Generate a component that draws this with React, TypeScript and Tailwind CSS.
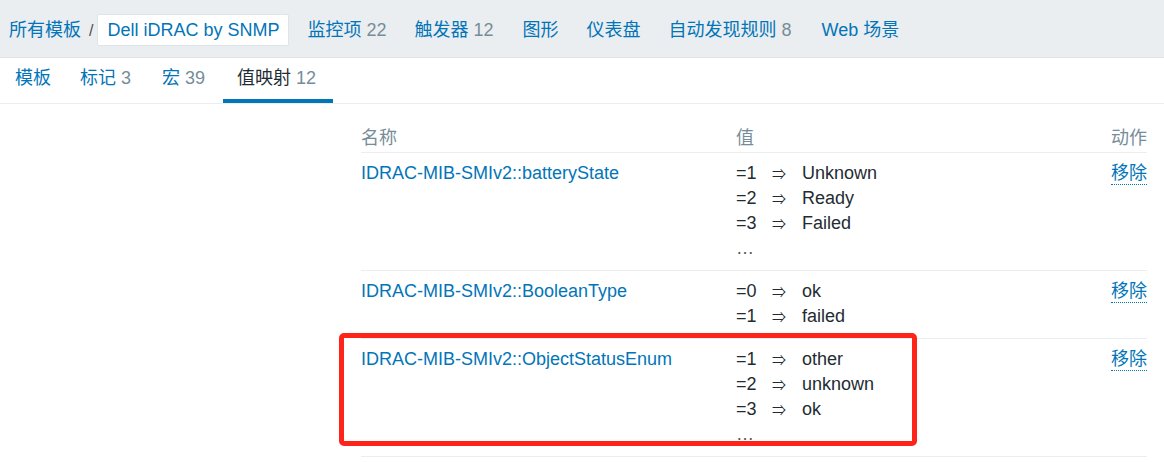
import React from "react";

const FONT = { fontFamily: '"Liberation Sans", Arial, "Noto Sans CJK SC", sans-serif' };

type Row = { name: string; values: [string, string][]; more: boolean };

const rows: Row[] = [
  {
    name: "IDRAC-MIB-SMIv2::batteryState",
    values: [
      ["=1", "Unknown"],
      ["=2", "Ready"],
      ["=3", "Failed"],
    ],
    more: true,
  },
  {
    name: "IDRAC-MIB-SMIv2::BooleanType",
    values: [
      ["=0", "ok"],
      ["=1", "failed"],
    ],
    more: false,
  },
  {
    name: "IDRAC-MIB-SMIv2::ObjectStatusEnum",
    values: [
      ["=1", "other"],
      ["=2", "unknown"],
      ["=3", "ok"],
    ],
    more: true,
  },
];

function NavItem({ label, count, className }: { label: string; count?: string; className?: string }) {
  return (
    <span className={"whitespace-nowrap " + (className || "")}>
      <span className="text-[#0275b8]">{label}</span>
      {count && <span className="text-[#768d99]"> {count}</span>}
    </span>
  );
}

export default function App() {
  return (
    <div className="w-[1164px] h-[462px] bg-white text-[18px] leading-[25px] text-[#1f2c33] relative overflow-hidden" style={FONT}>
      {/* top bar */}
      <div className="h-[58px] bg-[#ebeef0] border-b border-[#dfe4e7] flex items-start pt-[14px] pl-[9px]">
        <div className="flex items-center h-[32px]">
          <span className="text-[#0275b8]">所有模板</span>
          <span className="text-[#4f4f4f] text-[16px] ml-[8px] mr-[4px]">/</span>
          <span className="h-[32px] flex items-center px-[9px] bg-white border border-[#dfe4e7] rounded-[2px] text-[#0275b8]">
            Dell iDRAC by SNMP
          </span>
          <NavItem label="监控项" count="22" className="ml-[18px]" />
          <NavItem label="触发器" count="12" className="ml-[28px]" />
          <NavItem label="图形" className="ml-[29px]" />
          <NavItem label="仪表盘" className="ml-[28px]" />
          <NavItem label="自动发现规则" count="8" className="ml-[28px]" />
          <NavItem label="Web 场景" className="ml-[30px]" />
        </div>
      </div>

      {/* tabs */}
      <div className="h-[46px] border-b border-[#ebeef0] flex items-stretch pl-[1px]">
        <div className="px-[14px] flex items-center border-b-[4px] border-transparent">
          <span className="text-[#0275b8]">模板</span>
        </div>
        <div className="ml-[1px] px-[14px] flex items-center border-b-[4px] border-transparent">
          <span className="text-[#0275b8]">标记</span>
          <span className="text-[#768d99]">&nbsp;3</span>
        </div>
        <div className="ml-[3px] px-[14px] flex items-center border-b-[4px] border-transparent">
          <span className="text-[#0275b8]">宏</span>
          <span className="text-[#768d99]">&nbsp;39</span>
        </div>
        <div className="ml-[4px] pl-[14px] pr-[17px] flex items-center border-b-[4px] border-[#0275b8]">
          <span className="text-[#1f2c33]">值映射</span>
          <span className="text-[#768d99]">&nbsp;12</span>
        </div>
      </div>

      {/* table */}
      <div className="pl-[361px] pr-[17px]">
        <div className="grid grid-cols-[375px_1fr_auto] text-[#768d99] border-b border-[#ebeef0] pt-[22px] pb-[1px]">
          <div>名称</div>
          <div>值</div>
          <div className="text-right">动作</div>
        </div>
        {rows.map((r) => (
          <div key={r.name} className="grid grid-cols-[375px_1fr_auto] border-b border-[#ebeef0] pt-[8px] pb-[9px]">
            <div className="text-[#0275b8]">{r.name}</div>
            <div>
              {r.values.map(([k, v]) => (
                <div key={k} className="flex items-center">
                  <span className="w-[36px]">{k}</span>
                  <span className="w-[30px] text-[14px] leading-[25px] text-[#1f2c33]" style={{ fontFamily: '"Noto Sans CJK SC", sans-serif' }}>⇒</span>
                  <span>{v}</span>
                </div>
              ))}
              {r.more && <div className="text-[#4f5a60]">…</div>}
            </div>
            <div className="text-right">
              <span className="text-[#0275b8] border-b border-dotted border-[#0275b8] leading-[22px] inline-block">移除</span>
            </div>
          </div>
        ))}
      </div>

      {/* annotation */}
      <div className="absolute left-[339px] top-[333px] w-[578px] h-[113px] border-[5px] border-[#ff241a] rounded-[5px] pointer-events-none" />
    </div>
  );
}
